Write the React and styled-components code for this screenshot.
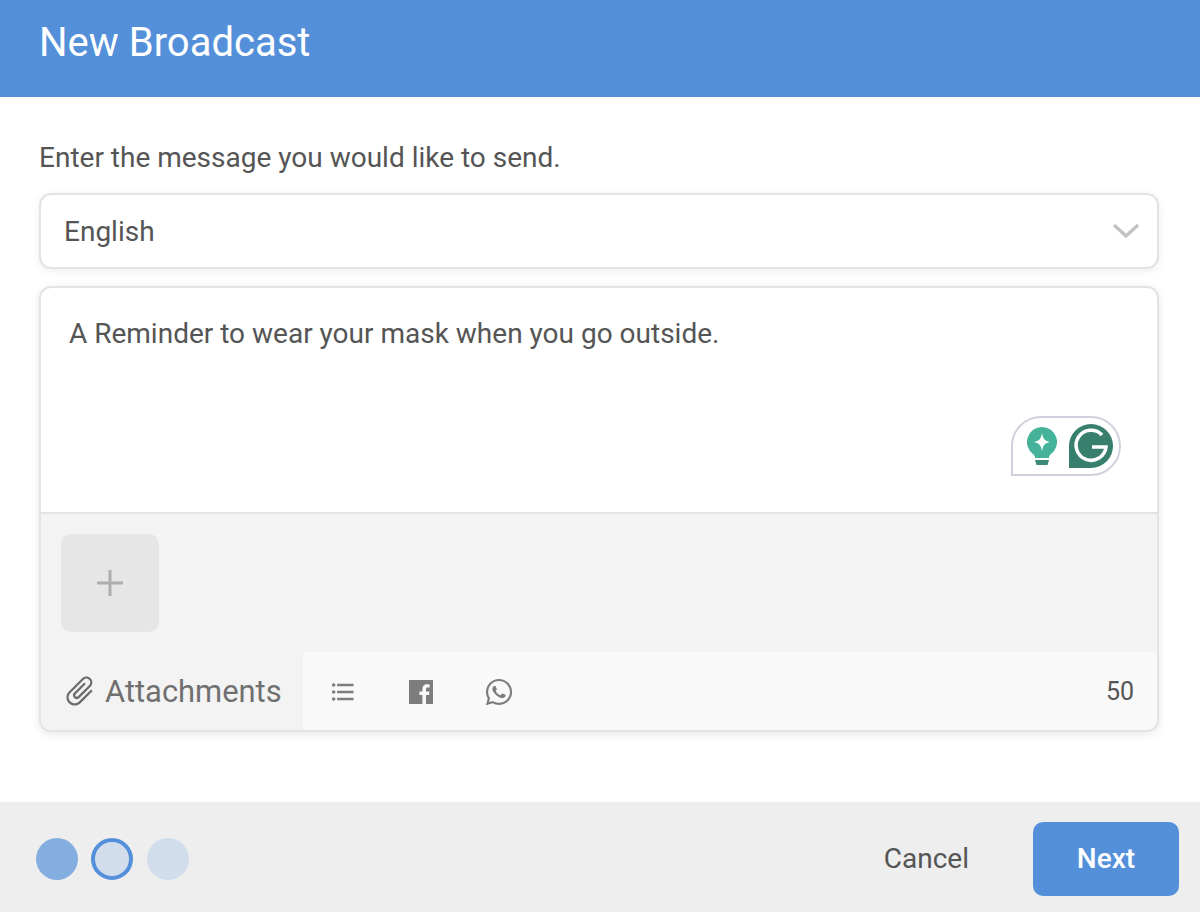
import React from "react";
import styled, { createGlobalStyle } from "styled-components";
import { FaWhatsapp } from "react-icons/fa";
import { MdAttachFile, MdFormatListBulleted } from "react-icons/md";

const GlobalStyle = createGlobalStyle`
  html, body { margin: 0; padding: 0; background: #fff; }
  body { font-family: Roboto, "Liberation Sans", sans-serif; color: #555; }
`;

const Page = styled.div`
  width: 1200px;
  height: 912px;
  display: flex;
  flex-direction: column;
  overflow: hidden;
`;

const Header = styled.header`
  height: 97px;
  flex: none;
  background: #5490da;
  color: #fff;
  font-size: 40px;
  line-height: 86px;
  padding-left: 39px;
  box-sizing: border-box;
`;

const Body = styled.main`
  flex: 1;
  padding: 41px 41px 0 39px;
  display: flex;
  flex-direction: column;
`;

const Prompt = styled.p`
  margin: 0 0 15px;
  font-size: 28px;
  line-height: 40px;
  color: #555;
`;

const Select = styled.div`
  height: 76px;
  box-sizing: border-box;
  border: 2px solid #e3e3e3;
  border-radius: 12px;
  box-shadow: 0 2px 8px rgba(0, 0, 0, 0.07);
  display: flex;
  align-items: center;
  justify-content: space-between;
  padding: 0 17px 0 23px;
  font-size: 28px;
  color: #555;
  margin-bottom: 17px;
`;

const Editor = styled.section`
  height: 446px;
  box-sizing: border-box;
  border: 2px solid #e3e3e3;
  border-radius: 12px;
  box-shadow: 0 2px 8px rgba(0, 0, 0, 0.1);
  overflow: hidden;
  display: flex;
  flex-direction: column;
`;

const MessageArea = styled.div`
  position: relative;
  height: 226px;
  flex: none;
  box-sizing: border-box;
  padding: 28px 28px;
  font-size: 28px;
  line-height: 36px;
  color: #555;
  border-bottom: 2px solid #e3e3e3;
`;

const Grammarly = styled.div`
  position: absolute;
  right: 36px;
  bottom: 36px;
  width: 110px;
  height: 60px;
  box-sizing: border-box;
  border: 2px solid #cfd2dc;
  border-radius: 30px 30px 30px 0;
  display: flex;
  align-items: center;
  justify-content: space-between;
  padding: 0 5px 0 13px;
  background: #fff;
`;

const AttachArea = styled.div`
  flex: 1;
  background: #f3f3f3;
  display: flex;
  flex-direction: column;
`;

const Thumbs = styled.div`
  flex: 1;
  padding: 20px;
`;

const AddTile = styled.div`
  width: 98px;
  height: 98px;
  border-radius: 10px;
  background: #e6e6e6;
  display: flex;
  align-items: center;
  justify-content: center;
`;

const Toolbar = styled.div`
  height: 81px;
  flex: none;
  display: flex;
  align-items: stretch;
`;

const AttachButton = styled.div`
  width: 262px;
  flex: none;
  box-sizing: border-box;
  padding: 0 0 3px 21px;
  display: flex;
  align-items: center;
  gap: 7px;
  font-size: 30.9px;
  color: #707070;
`;

const Tools = styled.div`
  flex: 1;
  background: #f9f9f9;
  display: flex;
  align-items: center;
  padding: 0 23px 2px 26px;
  color: #7d7d7d;
`;

const Tool = styled.span`
  width: 28px;
  height: 28px;
  margin-right: 50px;
  display: flex;
  align-items: center;
  justify-content: center;
`;

const Count = styled.span`
  margin-left: auto;
  font-size: 25px;
  color: #555;
`;

const Footer = styled.footer`
  height: 110px;
  flex: none;
  box-sizing: border-box;
  background: #eee;
  display: flex;
  align-items: center;
  padding: 4px 21px 0 36px;
`;

const Steps = styled.div`
  display: flex;
  gap: 13.4px;
  flex: 1;
`;

const Step = styled.span`
  width: 42px;
  height: 42px;
  box-sizing: border-box;
  border-radius: 50%;
  background: ${(p) => (p.$done ? "#85aee0" : "#d1ddeb")};
  border: ${(p) => (p.$active ? "4px solid #5490da" : "none")};
`;

const CancelButton = styled.button`
  border: none;
  background: none;
  padding: 0 0 2px;
  margin-right: 64px;
  font: 28px Roboto, "Liberation Sans", sans-serif;
  color: #555;
`;

const NextButton = styled.button`
  width: 146px;
  height: 74px;
  border: none;
  border-radius: 10px;
  padding: 0 0 2px;
  background: #5490da;
  color: #fff;
  font: 500 28px Roboto, "Liberation Sans", sans-serif;
`;

const App = () => {
  return (
    <Page>
      <GlobalStyle />
      <Header>New Broadcast</Header>
      <Body>
        <Prompt>Enter the message you would like to send.</Prompt>
        <Select>
          English
          <svg width="28" height="18" viewBox="0 0 28 18" fill="none">
            <path d="M2 3l12 11L26 3" stroke="#c2c2c2" strokeWidth="3.4" />
          </svg>
        </Select>
        <Editor>
          <MessageArea>
            A Reminder to wear your mask when you go outside.
            <Grammarly>
              <svg width="32" height="40" viewBox="0 0 32 40">
                <path d="M16 1a15 15 0 0 0-9 27c1.500 1.200 2 2.400 2 4h14c0-1.600.5-2.800 2-4A15 15 0 0 0 16 1z" fill="#45b39a" />
                <path d="M16 7c1 6 3 8 8 9-5 1-7 3-8 9-1-6-3-8-8-9 5-1 7-3 8-9z" fill="#fff" />
                <path d="M9 34h14l-1.500 5h-11z" fill="#3f8a76" />
              </svg>
              <svg width="46" height="46" viewBox="0 0 46 46">
                <path d="M23 1a22 22 0 0 1 0 44H1V23A22 22 0 0 1 23 1z" fill="#387f6e" />
                <path d="M34 12a15 15 0 1 0 4 12H24" fill="none" stroke="#fff" strokeWidth="3.500" />
              </svg>
            </Grammarly>
          </MessageArea>
          <AttachArea>
            <Thumbs>
              <AddTile>
                <svg width="30" height="30" viewBox="0 0 30 30">
                  <path d="M15 2v26M2 15h26" stroke="#aeaeae" strokeWidth="3" />
                </svg>
              </AddTile>
            </Thumbs>
            <Toolbar>
              <AttachButton>
                <MdAttachFile size={36} color="#6c6c6c" style={{ transform: "rotate(45deg)" }} />
                Attachments
              </AttachButton>
              <Tools>
                <Tool><MdFormatListBulleted size={30} /></Tool>
                <Tool>
                  <svg width="24" height="24" viewBox="0 0 24 24">
                    <path d="M0 0h24v24h-7v-9h3l.5-3.500H17V9.300c0-1 .4-1.700 1.800-1.700h1.800V4.400c-.5 0-1.500-.2-2.700-.2-2.700 0-4.500 1.600-4.500 4.700v2.600h-3V15h3v9H0z" fill="#7d7d7d" />
                  </svg>
                </Tool>
                <Tool><FaWhatsapp size={30} /></Tool>
                <Count>50</Count>
              </Tools>
            </Toolbar>
          </AttachArea>
        </Editor>
      </Body>
      <Footer>
        <Steps>
          <Step $done />
          <Step $active />
          <Step />
        </Steps>
        <CancelButton>Cancel</CancelButton>
        <NextButton>Next</NextButton>
      </Footer>
    </Page>
  );
};

export default App;
